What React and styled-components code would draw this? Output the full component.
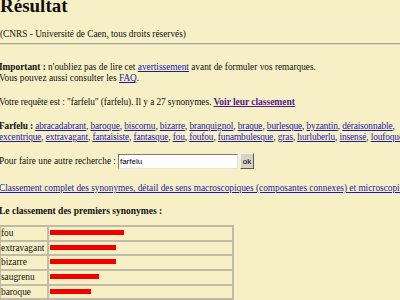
import React from 'react';
import styled, { createGlobalStyle } from 'styled-components';

const GlobalStyle = createGlobalStyle`
  html, body {
    margin: 0;
    padding: 0;
    overflow: hidden;
    background: #f7f0c6;
  }
  body {
    font-family: "Liberation Serif", "Times New Roman", serif;
    font-size: 9.3px;
    color: #111;
  }
`;

const Page = styled.div`
  width: 460px;
  margin-left: -1px;
  line-height: 11px;
`;

const Title = styled.h1`
  margin: -4px 0 0 1px;
  font-size: 19px;
  line-height: 19px;
  font-weight: bold;
`;

const Credit = styled.p`
  margin: 14px 0 0 1px;
`;

const Rule = styled.hr`
  margin: 3px 0 0 0;
  border: 0;
  border-top: 1px solid #a9a596;
  border-bottom: 1px solid #dcd7c2;
  width: 500px;
`;

const Para = styled.p`
  margin: ${({ top }) => top || 11}px 0 0 0;
  white-space: nowrap;
  letter-spacing: ${({ tight }) => tight || 0}px;
`;

const A = styled.a`
  color: ${({ visited }) => (visited ? '#551a8b' : '#1a1aa6')};
  text-decoration: underline;
  font-weight: ${({ bold }) => (bold ? 'bold' : 'normal')};
  font-size: ${({ bold }) => (bold ? '9.6px' : 'inherit')};
`;

const SearchRow = styled.form`
  display: flex;
  align-items: center;
  margin: 10px 0 0 0;
  white-space: nowrap;
`;

const Input = styled.input`
  width: 116px;
  height: 13px;
  padding: 0 1px;
  margin: 0 2px 0 2px;
  border: 1px solid;
  border-color: #7a7870 #e6e3d8 #e6e3d8 #7a7870;
  background: #fff;
  font-family: "Liberation Sans", Arial, sans-serif;
  font-size: 8px;
  color: #000;
  outline: none;
`;

const Button = styled.button`
  width: 14px;
  height: 16px;
  padding: 0;
  border: 1px solid;
  border-color: #f2f0ea #5c5a54 #5c5a54 #f2f0ea;
  background: #d6d2c8;
  font-family: "Liberation Sans", Arial, sans-serif;
  font-size: 8px;
  color: #000;
`;

const Heading = styled.h3`
  margin: 12px 0 0 0;
  font-size: 9.5px;
  font-weight: bold;
`;

const Table = styled.table`
  margin-top: 8px;
  border-collapse: separate;
  border-spacing: 0;
  border: 1px solid #bdb8a4;
  width: 235px;
`;

const Cell = styled.td`
  border: 1px solid #c2bca7;
  padding: 0;
  height: 12.7px;
  line-height: 11px;
  vertical-align: middle;
  width: ${({ label }) => (label ? '46px' : 'auto')};
`;

const Bar = styled.div`
  height: 5px;
  background: #f20000;
  margin: -2px 0 0 1px;
`;

const words1 = ['abracadabrant', 'baroque', 'biscornu', 'bizarre', 'branquignol', 'braque', 'burlesque', 'byzantin', 'déraisonnable'];
const words2 = ['excentrique', 'extravagant', 'fantaisiste', 'fantasque', 'fou', 'foufou', 'funambulesque', 'gras', 'hurluberlu', 'insensé', 'loufoque', 'lunaire'];

const ranking = [
  { w: 'fou', v: 74 },
  { w: 'extravagant', v: 66 },
  { w: 'bizarre', v: 66 },
  { w: 'saugrenu', v: 49 },
  { w: 'baroque', v: 41 },
];

function WordList({ words, last }) {
  return words.map((w, i) => (
    <React.Fragment key={w}>
      <A href="#">{w}</A>
      {i < words.length - 1 || !last ? ', ' : ''}
    </React.Fragment>
  ));
}

export default function App() {
  return (
    <>
      <GlobalStyle />
      <Page>
        <Title>Résultat</Title>
        <Credit>(CNRS - Université de Caen, tous droits réservés)</Credit>
        <Rule />
        <Para top={17}>
          <b>Important :</b> n'oubliez pas de lire cet <A href="#">avertissement</A> avant de formuler vos remarques.
          <br />
          Vous pouvez aussi consulter les <A href="#">FAQ</A>.
        </Para>
        <Para top={12} tight={-0.08}>
          Votre requête est : "farfelu" (farfelu). Il y a 27 synonymes. <A href="#" visited="1" bold="1">Voir leur classement</A>
        </Para>
        <Para top={13} tight={-0.1}>
          <b>Farfelu : </b>
          <WordList words={words1} />
          <br />
          <WordList words={words2} last />
        </Para>
        <SearchRow onSubmit={(e) => e.preventDefault()}>
          Pour faire une autre recherche :
          <Input defaultValue="farfelu" />
          <Button type="submit">ok</Button>
        </SearchRow>
        <Para top={14}>
          <A href="#">Classement complet des synonymes, détail des sens macroscopiques (composantes connexes) et microscopiques</A>
        </Para>
        <Heading>Le classement des premiers synonymes :</Heading>
        <Table>
          <tbody>
            {ranking.map((r) => (
              <tr key={r.w}>
                <Cell label="1">{r.w}</Cell>
                <Cell>
                  <Bar style={{ width: r.v + 'px' }} />
                </Cell>
              </tr>
            ))}
          </tbody>
        </Table>
      </Page>
    </>
  );
}
